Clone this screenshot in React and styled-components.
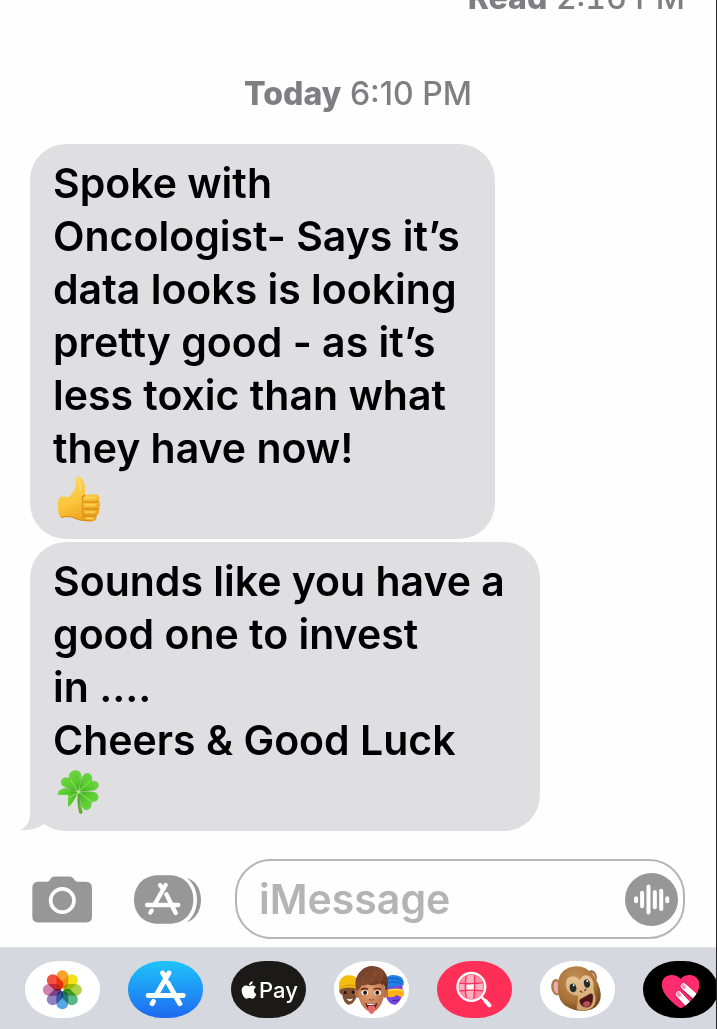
import React from 'react';
import styled, { createGlobalStyle } from 'styled-components';
import { FaApple } from 'react-icons/fa';

const GlobalStyle = createGlobalStyle`
  * {
    box-sizing: border-box;
  }

  body {
    margin: 0;
    background: #fefefe;
    font-family: Inter, 'Noto Sans', sans-serif;
  }
`;

const Page = styled.div`
  display: flex;
  flex-direction: column;
  min-height: 100vh;
  border-right: 1px solid #2a2a2c;
  overflow: hidden;
`;

const Meta = styled.p`
  margin: 0;
  color: #7f7e83;
  font-size: 32px;
  font-weight: 500;
  line-height: 40px;
  text-align: center;

  strong {
    font-weight: 800;
  }
`;

// the older thread is scrolled up, only the foot of its receipt shows
const Receipt = styled.div`
  display: flex;
  align-items: flex-end;
  justify-content: flex-end;
  height: 18px;
  padding-right: 31px;
  font-variant-numeric: tabular-nums;
  overflow: hidden;
`;

const Thread = styled.main`
  display: flex;
  flex: 1;
  flex-direction: column;
  align-items: flex-start;
  gap: 3px;
  padding: 56px 30px 28px;
`;

const DateLine = styled(Meta)`
  align-self: stretch;
  margin-bottom: 27px;
`;

const Bubble = styled.div`
  position: relative;
  padding: 13px 35px 11px 23px;
  border-radius: 36px;
  background: #dfdfe2;
  color: #000;
  font-size: 41px;
  font-weight: 600;
  line-height: 53px;
  white-space: pre-line;
`;

const Emoji = styled.svg`
  display: block;
  width: 49px;
  height: 53px;
`;

const Tail = styled.svg`
  position: absolute;
  left: -10px;
  bottom: 0;
  width: 48px;
  height: 36px;
`;

const Composer = styled.form`
  display: flex;
  align-items: center;
  padding: 0 31px 8px 32px;
`;

const IconButton = styled.button`
  display: flex;
  flex-shrink: 0;
  margin: 0;
  padding: 0;
  border: 0;
  background: none;
  cursor: pointer;

  svg {
    display: block;
    width: ${(props) => props.$width}px;
    height: ${(props) => props.$height}px;
  }
`;

const Tools = styled.div`
  display: flex;
  align-items: center;
  gap: 42px;
  margin-right: 34px;
`;

const Field = styled.div`
  display: flex;
  flex: 1;
  align-items: center;
  min-width: 0;
  height: 80px;
  padding: 0 5px 0 22px;
  border: 2px solid #b5b5b7;
  border-radius: 36px;
`;

const MessageInput = styled.input`
  flex: 1;
  min-width: 0;
  padding: 0;
  border: 0;
  outline: 0;
  background: transparent;
  color: #000;
  font-family: inherit;
  font-size: 41px;
  font-weight: 600;
  line-height: 53px;

  &::placeholder {
    color: #b4b4b7;
    opacity: 1;
  }
`;

const AppStrip = styled.nav`
  display: flex;
  gap: 28px;
  height: 83px;
  padding: 13px 0 0 25px;
  border-top: 1px solid #e3e4e8;
  background: #d5d8df;
  overflow: hidden;
`;

const AppButton = styled.button`
  display: flex;
  flex-shrink: 0;
  align-items: center;
  justify-content: center;
  width: 75px;
  height: 57px;
  padding: 0;
  border: 0;
  border-radius: 34px / 28px;
  background: ${(props) => props.$fill || '#fff'};
  color: #fff;
  font-family: inherit;
  font-size: 22px;
  font-weight: 500;
  overflow: hidden;
  cursor: pointer;
`;

const AppArt = styled.svg`
  display: block;
  width: 75px;
  height: 57px;
`;

const ThumbsUp = () => (
  <Emoji viewBox="159 45 147 159" role="img" aria-label="thumbs up">
    <defs>
      <linearGradient id="thumb" x1="0" y1="0" x2="0.4" y2="1">
        <stop offset="0" stopColor="#ffd765" />
        <stop offset="0.6" stopColor="#fcc63e" />
        <stop offset="1" stopColor="#eda51f" />
      </linearGradient>
    </defs>
    <path
      d="M178 111 Q192 108 207 112 Q218 99 226 83 Q229 72 226 60 Q226 51 236 50 Q248 51 252 65 Q258 84 254 104 L285 103 Q298 104 298 114 Q298 120 295 124 Q301 127 300 135 Q300 142 295 146 Q300 151 297 159 Q294 165 288 166 Q292 171 288 178 Q286 184 274 184 L255 183 Q238 182 227 176 Q214 169 204 171 Q192 170 183 174 Q175 166 174 143 Q173 122 178 111Z"
      fill="url(#thumb)"
    />
    <path d="M249 107 Q243 115 249 125 Q242 134 249 146 Q243 155 251 165 Q246 174 254 181" fill="none" stroke="#d88b18" strokeWidth="3" />
    <path d="M250 125 Q272 128 295 124 M250 146 Q274 149 296 146 M252 166 Q272 170 289 166 M254 105 Q250 109 248 113" fill="none" stroke="#d68a1a" strokeWidth="4" strokeLinecap="round" />
    <path d="M257 113 H284 M257 135 H286 M258 156 H284 M260 175 H278" stroke="#ffd362" strokeWidth="5" strokeLinecap="round" />
    <path d="M184 173 Q193 168 204 170 Q215 169 228 176 Q240 182 274 183" fill="none" stroke="#d9861a" strokeWidth="3" />
    <path d="M234 56 Q243 72 240 91" fill="none" stroke="#ffe080" strokeWidth="4" strokeLinecap="round" />
  </Emoji>
);

const Clover = () => (
  <Emoji viewBox="159 77 147 159" role="img" aria-label="four leaf clover">
    <defs>
      <radialGradient id="leaf" gradientUnits="userSpaceOnUse" cx="236" cy="153" r="66">
        <stop offset="0" stopColor="#46ad24" />
        <stop offset="0.5" stopColor="#5ccc2e" />
        <stop offset="1" stopColor="#6ad840" />
      </radialGradient>
    </defs>
    <path d="M234 155 Q230 180 238 214 Q241 219 246 215 Q248 212 246 209 Q238 188 241 155Z" fill="#59b52b" stroke="#36851e" strokeWidth="1" />
    <g fill="url(#leaf)" stroke="#49a832" strokeWidth="1">
      <path d="M234 150 Q208 143 196 137 Q182 132 184 119 Q189 105 207 111 Q206 91 223 88 Q240 86 243 101 Q244 117 234 150Z" />
      <path d="M238 150 Q240 119 248 105 Q257 92 269 98 Q279 105 274 121 Q290 116 295 128 Q297 142 281 147 Q261 151 238 150Z" />
      <path d="M233 154 Q220 181 211 191 Q200 202 191 191 Q187 183 194 173 Q178 177 174 162 Q173 146 190 142 Q208 139 233 154Z" />
      <path d="M239 154 Q264 149 282 153 Q296 157 294 171 Q289 184 274 180 Q276 201 263 205 Q250 207 245 193 Q240 175 239 154Z" />
    </g>
    <path d="M231 147 L211 115 M240 146 L270 121 M231 157 L197 172 M242 157 L271 179" stroke="#8fe86a" strokeWidth="3" strokeLinecap="round" />
    <path d="M229 150 Q204 141 193 123 M235 143 Q236 113 224 97 M241 143 Q248 119 263 105 M246 149 Q273 145 287 130 M229 155 Q196 151 181 159 M230 161 Q215 184 201 188 M247 154 Q275 157 285 168 M242 161 Q255 187 263 197" fill="none" stroke="#2f951d" strokeWidth="1" opacity="0.5" />
    <circle cx="236" cy="152" r="5" fill="#b5ed64" />
  </Emoji>
);

const CameraIcon = () => (
  <svg viewBox="96 76 180 140" aria-hidden="true">
    <path
      fill="#979797"
      d="M114 93 H139 Q145 93 149 88 L153 82 Q157 77 164 77 H209 Q216 77 220 82 L224 88 Q228 93 234 93 H258 Q276 94 276 112 V198 Q276 215 258 215 H114 Q97 215 97 198 V111 Q97 94 114 93Z"
    />
    <circle cx="187" cy="149" r="35" fill="none" stroke="#fff" strokeWidth="11" />
  </svg>
);

const AppsIcon = () => (
  <svg viewBox="402 72 201 147" aria-hidden="true">
    <path fill="#979797" d="M475 73 H508 C552 73 580 105 580 146 C580 187 552 218 508 218 H475 C430 218 402 187 402 146 C402 105 430 73 475 73Z" />
    <path fill="#979797" d="M560 80 C588 89 603 115 603 146 C603 177 588 204 560 214 C580 197 591 174 591 146 C591 118 580 96 560 80Z" />
    <g stroke="#fff" strokeWidth="13" strokeLinecap="round" fill="none">
      <path d="M441 162 H535" />
      <path d="M497 102 L464 160" />
      <path d="M480 102 L485 109" />
      <path d="M499 130 L527 186" />
      <path d="M455 179 L451 185" />
    </g>
  </svg>
);

const AudioIcon = () => (
  <svg viewBox="195 67 158 158" aria-hidden="true">
    <circle cx="274" cy="146" r="79" fill="#979797" />
    <path d="M228 142 V151 M246 126 V166 M265 107 V185 M284 124 V169 M303 120 V174 M321 142 V151" stroke="#fff" strokeWidth="12" strokeLinecap="round" />
  </svg>
);

const petals = ['#f9a32b', '#f3e11c', '#acd34b', '#58b987', '#5aa6e3', '#9182bf', '#cf82b1', '#f35044'];

const PhotosArt = () => (
  <AppArt viewBox="75 63 227 170" aria-hidden="true">
    <g transform="translate(188 149)">
      {petals.map((color, i) => (
        <Petal key={color} x="-18" y="-59" width="36" height="56" rx="18" fill={color} transform={`rotate(${i * 45})`} />
      ))}
    </g>
    <circle cx="188" cy="149" r="4" fill="#fff" />
  </AppArt>
);

const Petal = styled.rect`
  mix-blend-mode: multiply;
`;

const StoreArt = () => (
  <AppArt viewBox="384 63 227 170" aria-hidden="true">
    <g stroke="#fff" strokeWidth="15" strokeLinecap="round" fill="none">
      <path d="M445 166 H551" />
      <path d="M508 98 L470 164" />
      <path d="M489 98 L495 108" />
      <path d="M505 128 L541 191" />
      <path d="M461 184 L457 191" />
    </g>
  </AppArt>
);

const MemojiArt = () => (
  <AppArt viewBox="374 63 227 170" aria-hidden="true">
    <defs>
      <radialGradient id="face" cx="0.45" cy="0.4" r="0.65">
        <stop offset="0" stopColor="#e7a777" />
        <stop offset="1" stopColor="#b66b43" />
      </radialGradient>
      <linearGradient id="hair" x1="0" y1="0" x2="1" y2="1">
        <stop offset="0" stopColor="#6a3b27" />
        <stop offset="0.5" stopColor="#84492f" />
        <stop offset="1" stopColor="#52291a" />
      </linearGradient>
    </defs>
    <path d="M394 145 Q388 148 391 157 Q395 164 399 164 Q402 187 416 194 Q433 195 443 169 L442 135 L400 135Z" fill="#805032" />
    <path d="M389 140 Q387 111 413 105 Q439 102 447 120 V148 Q420 135 389 149Z" fill="#f7bd0c" />
    <path d="M394 142 Q418 129 442 139" fill="none" stroke="#dc9607" strokeWidth="4" />
    <ellipse cx="408" cy="157" rx="4" ry="5" fill="#24130f" />
    <ellipse cx="432" cy="156" rx="4" ry="5" fill="#24130f" />
    <path d="M411 174 Q421 180 432 173 Q430 184 421 184 Q413 183 411 174Z" fill="#fff" stroke="#472319" strokeWidth="1" />
    <path d="M532 135 L581 130 L582 158 Q577 186 560 194 Q543 195 534 176Z" fill="#7547df" />
    <path d="M528 116 Q541 100 566 106 Q587 111 585 133 L538 143Z" fill="#2280e8" />
    <path d="M531 118 Q559 106 584 126 M532 129 Q564 120 584 134" fill="none" stroke="#125bb6" strokeWidth="3" />
    <path d="M535 149 Q562 141 586 149 L585 168 Q575 173 564 165 Q551 176 536 169Z" fill="#ffaf14" />
    <path d="M538 151 Q562 145 584 152" stroke="#ffe057" strokeWidth="4" fill="none" />
    <path d="M551 181 Q560 185 571 179" fill="none" stroke="#41218d" strokeWidth="3" />
    <ellipse cx="445" cy="158" rx="8" ry="15" fill="#b87045" />
    <ellipse cx="529" cy="158" rx="8" ry="15" fill="#b87045" />
    <path d="M448 122 Q484 98 526 125 L526 165 Q520 195 503 210 Q488 221 472 210 Q452 194 447 164Z" fill="url(#face)" />
    <path d="M441 150 Q432 111 456 91 Q474 74 497 78 Q523 81 533 104 Q541 124 533 152 Q528 147 525 132 Q519 136 512 129 Q493 140 475 132 Q466 137 458 135 Q453 144 447 151Z" fill="url(#hair)" />
    <path d="M459 128 Q463 106 480 93 M479 128 Q500 112 501 93 M513 125 Q522 110 516 97" stroke="#995b3e" strokeWidth="2" fill="none" />
    <path d="M456 149 Q465 142 477 147 M494 147 Q506 142 517 148" stroke="#512819" strokeWidth="4" fill="none" />
    <ellipse cx="467" cy="158" rx="10" ry="7" fill="#fff" />
    <ellipse cx="506" cy="158" rx="10" ry="7" fill="#fff" />
    <circle cx="468" cy="158" r="6" fill="#24140f" />
    <circle cx="505" cy="158" r="6" fill="#24140f" />
    <path d="M480 178 Q487 183 494 178" stroke="#914c30" strokeWidth="3" fill="none" />
    <path d="M469 189 Q487 195 505 188 Q502 208 487 210 Q473 207 469 189Z" fill="#5c1c1c" />
    <path d="M474 190 Q487 194 500 190 V193 Q487 197 474 194Z" fill="#fff" />
    <path d="M477 199 Q487 194 498 199 L496 215 Q488 229 479 215Z" fill="#f56875" />
    <path d="M487 202 V216" stroke="#d7445b" strokeWidth="2" />
  </AppArt>
);

const ImagesArt = () => (
  <AppArt viewBox="52 63 227 170" aria-hidden="true">
    <defs>
      <clipPath id="lens">
        <circle cx="156" cy="140" r="37" />
      </clipPath>
    </defs>
    <g clipPath="url(#lens)">
      <rect x="115" y="99" width="82" height="82" fill="#ffb0c1" />
      <path d="M115 99 H139 V129 H115Z M163 99 H197 V129 H163Z M115 151 H139 V181 H115Z M163 151 H197 V181 H163Z" fill="#ff8ea5" />
      <rect x="143" y="131" width="20" height="20" fill="#fff" />
      <path d="M142 99 Q133 140 142 181 M165 99 Q168 140 163 181 M115 128 Q156 134 197 126 M115 153 Q156 147 197 153" fill="none" stroke="#ff2f58" strokeWidth="4" />
    </g>
    <circle cx="156" cy="140" r="42" fill="none" stroke="#fff" strokeWidth="7" />
    <path d="M187 171 L197 181" stroke="#fff" strokeWidth="7" />
    <path d="M198 182 L211 196" stroke="#fff" strokeWidth="12" strokeLinecap="round" />
  </AppArt>
);

const MonkeyArt = () => (
  <AppArt viewBox="361 63 227 170" aria-hidden="true">
    <defs>
      <radialGradient id="fur" cx="0.4" cy="0.3" r="0.75">
        <stop offset="0" stopColor="#c39156" />
        <stop offset="0.65" stopColor="#a67238" />
        <stop offset="1" stopColor="#704519" />
      </radialGradient>
      <linearGradient id="muzzle" x1="0" y1="0" x2="0" y2="1">
        <stop offset="0" stopColor="#e7c596" />
        <stop offset="1" stopColor="#d1a16d" />
      </linearGradient>
    </defs>
    <ellipse cx="411" cy="141" rx="16" ry="25" fill="#ac7a46" transform="rotate(-8 411 141)" />
    <ellipse cx="411" cy="142" rx="9" ry="18" fill="#ebabb0" transform="rotate(-8 411 142)" />
    <ellipse cx="520" cy="107" rx="12" ry="18" fill="#986230" transform="rotate(-20 520 107)" />
    <ellipse cx="521" cy="108" rx="7" ry="12" fill="#e7a2a1" transform="rotate(-20 521 108)" />
    <path d="M416 130 Q417 91 455 80 Q493 71 519 100 Q542 130 545 162 Q546 194 519 207 Q479 222 439 198 Q411 179 416 130Z" fill="url(#fur)" />
    <path d="M439 135 Q438 109 460 108 Q476 109 481 121 Q488 105 502 105 Q520 109 523 130 Q521 147 526 163 Q536 185 519 203 Q493 219 472 207 L477 167 Q442 164 439 135Z" fill="url(#muzzle)" />
    <ellipse cx="461" cy="143" rx="10" ry="13" fill="#252c2c" transform="rotate(-14 461 143)" />
    <ellipse cx="503" cy="130" rx="9" ry="13" fill="#252c2c" transform="rotate(-14 503 130)" />
    <circle cx="463" cy="135" r="3" fill="#fff" />
    <circle cx="504" cy="122" r="3" fill="#fff" />
    <path d="M483 153 L488 156 M496 151 L500 147" stroke="#70411f" strokeWidth="4" strokeLinecap="round" />
    <path d="M482 178 Q493 173 506 165 Q519 157 521 165 Q523 190 510 200 Q493 205 484 193 Q479 185 482 178Z" fill="#50151b" stroke="#774524" strokeWidth="2" />
    <path d="M490 191 Q502 177 514 188 Q511 202 496 200Z" fill="#b95056" />
  </AppArt>
);

const HeartArt = () => (
  <AppArt viewBox="131 63 227 170" aria-hidden="true">
    <defs>
      <clipPath id="heart">
        <path d="M245 205 Q231 199 210 177 Q188 155 188 133 Q189 106 217 104 Q235 104 245 116 Q255 103 275 104 Q300 107 302 133 Q302 154 281 176 Q263 197 245 205Z" />
      </clipPath>
    </defs>
    <g clipPath="url(#heart)">
      <rect x="185" y="100" width="120" height="108" fill="#ff2d70" />
      <path d="M254 139 L310 195 M239 163 L290 215" stroke="#c81b54" strokeWidth="23" strokeLinecap="round" />
      <path d="M254 138 L308 186 M239 162 L286 212" stroke="#fff" strokeWidth="18" strokeLinecap="round" />
      <path d="M252 137 L256 141 M237 161 L241 165" stroke="#ff91b4" strokeWidth="11" strokeLinecap="round" />
    </g>
  </AppArt>
);

const apps = [
  { name: 'Photos', art: <PhotosArt /> },
  { name: 'App Store', fill: 'linear-gradient(#1fc4fb, #1e69f0)', art: <StoreArt /> },
  { name: 'Apple Pay', fill: '#1b1a18', art: <><FaApple size={20} aria-hidden="true" />Pay</> },
  { name: 'Memoji', art: <MemojiArt /> },
  { name: '#images', fill: '#ff2f58', art: <ImagesArt /> },
  { name: 'Animoji', art: <MonkeyArt /> },
  { name: 'Digital Touch', fill: '#000', art: <HeartArt /> },
];

const messages = [
  {
    text: 'Spoke with\nOncologist- Says it’s\ndata looks is looking\npretty good - as it’s\nless toxic than what\nthey have now!',
    emoji: <ThumbsUp />,
  },
  {
    text: 'Sounds like you have a\ngood one to invest\nin ....\nCheers & Good Luck',
    emoji: <Clover />,
    tail: true,
  },
];

const App = () => (
  <>
    <GlobalStyle />
    <Page>
      <Receipt>
        <Meta>
          <strong>Read</strong> 2:16 PM
        </Meta>
      </Receipt>
      <Thread>
        <DateLine>
          <strong>Today</strong> 6:10 PM
        </DateLine>
        {messages.map((message) => (
          <Bubble key={message.text}>
            {message.tail && (
              <Tail viewBox="0 0 48 36" aria-hidden="true">
                <path d="M0 0 H10 V36 H0Z M10 18 H48 V36 H10Z" fill="#fefefe" />
                <path d="M10 0 H48 V36 H44 Q32 35 24 29 Q14 36 0 35 Q10 31 10 19Z" fill="#dfdfe2" />
              </Tail>
            )}
            {message.text}
            {message.emoji}
          </Bubble>
        ))}
      </Thread>
      <Composer onSubmit={(e) => e.preventDefault()}>
        <Tools>
          <IconButton type="button" aria-label="Camera" $width={60} $height={47}>
            <CameraIcon />
          </IconButton>
          <IconButton type="button" aria-label="Apps" $width={67} $height={49}>
            <AppsIcon />
          </IconButton>
        </Tools>
        <Field>
          <MessageInput type="text" placeholder="iMessage" aria-label="iMessage" />
          <IconButton type="button" aria-label="Record audio" $width={53} $height={53}>
            <AudioIcon />
          </IconButton>
        </Field>
      </Composer>
      <AppStrip aria-label="iMessage apps">
        {apps.map((app) => (
          <AppButton key={app.name} type="button" aria-label={app.name} $fill={app.fill}>
            {app.art}
          </AppButton>
        ))}
      </AppStrip>
    </Page>
  </>
);

export default App;
